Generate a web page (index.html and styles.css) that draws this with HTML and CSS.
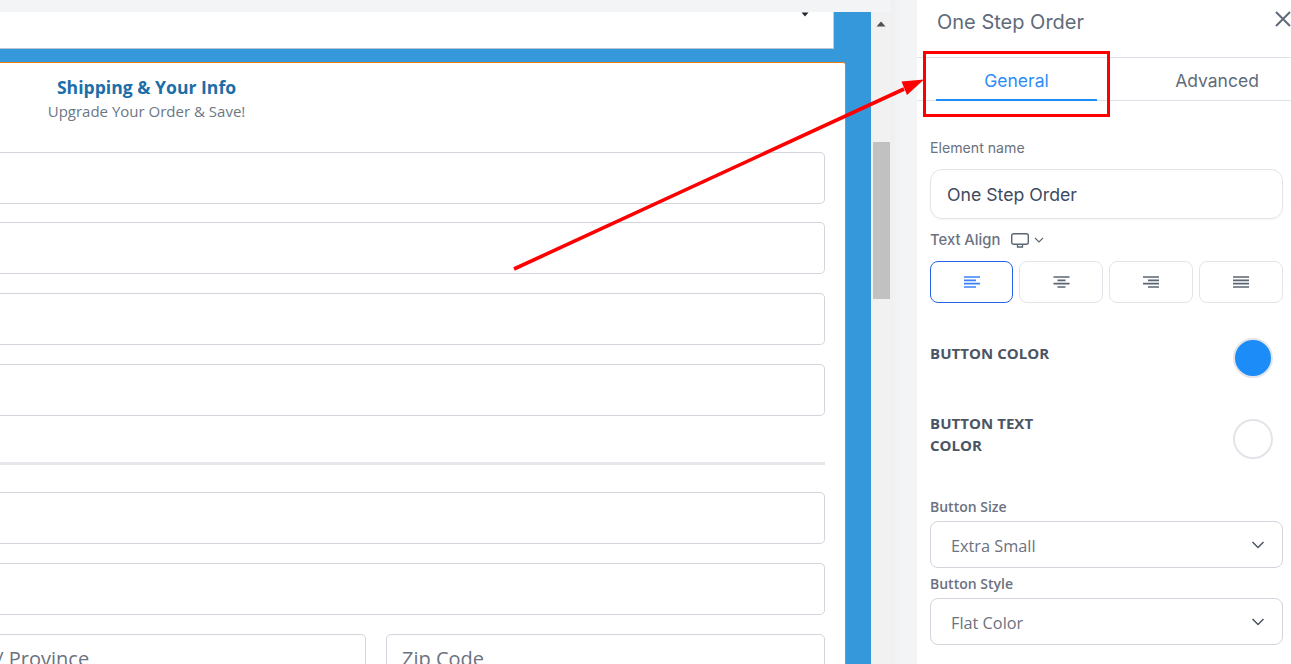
FILE: index.html
```html
<!DOCTYPE html>
<html lang="en">
<head>
<meta charset="utf-8">
<title>One Step Order</title>
<link rel="stylesheet" href="styles.css">
</head>
<body>
<div class="app">
  <main class="canvas">
    <div class="topbar"></div>
    <div class="stage">
      <div class="page">
        <div class="hero"><svg class="caret-mini" width="8" height="5" viewBox="0 0 8 5"><path d="M0.5 0.5h7L4 4.5z" fill="#1f2937"/></svg></div>
        <section class="card">
          <header class="card-head">
            <h2>Shipping &amp; Your Info</h2>
            <p>Upgrade Your Order &amp; Save!</p>
          </header>
          <div class="fields upper">
            <div class="field"></div>
            <div class="field"></div>
            <div class="field"></div>
            <div class="field"></div>
          </div>
          <hr class="rule">
          <div class="fields">
            <div class="field"></div>
            <div class="field"></div>
            <div class="field-row">
              <div class="field ph state"><span>State / Province</span></div>
              <div class="field ph"><span>Zip Code</span></div>
            </div>
          </div>
        </section>
      </div>
      <div class="scrollbar">
        <svg class="sb-arrow" width="10" height="6" viewBox="0 0 10 6"><path d="M5 0.5L9.5 5.5H0.5z" fill="#505050"/></svg>
        <div class="sb-thumb"></div>
      </div>
    </div>
  </main>
  <div class="gutter"></div>
  <aside class="panel">
    <div class="panel-head">
      <h1>One Step Order</h1>
      <svg class="close" width="16" height="16" viewBox="0 0 16 16"><path d="M1 1L15 15M15 1L1 15" stroke="#5f6b7a" stroke-width="2" fill="none"/></svg>
    </div>
    <nav class="tabs">
      <div class="tab active">General</div>
      <div class="tab">Advanced</div>
    </nav>
    <div class="panel-body">
      <label class="lbl name-lbl">Element name</label>
      <div class="name-input">One Step Order</div>
      <div class="align-head">
        <span>Text Align</span>
        <svg width="18" height="15" viewBox="0 0 18 15"><rect x="0.7" y="0.7" width="16.6" height="10.6" rx="2" fill="none" stroke="#5b6573" stroke-width="1.4"/><path d="M6.5 11.5v2.5h5v-2.5" fill="none" stroke="#5b6573" stroke-width="1.3"/></svg>
        <svg width="10" height="6" viewBox="0 0 10 6"><path d="M1 1l4 4 4-4" fill="none" stroke="#5b6573" stroke-width="1.1"/></svg>
      </div>
      <div class="align-row">
        <div class="align-btn on"><svg width="16" height="12" viewBox="0 0 16 12"><path d="M0 1h16M0 4.4h12M0 7.7h16M0 11h12" stroke="#3b82f6" stroke-width="1.7"/></svg></div>
        <div class="align-btn"><svg width="17" height="12" viewBox="0 0 17 12"><path d="M0.5 1h16M4.5 4.4h8M0.5 7.7h16M4.5 11h8" stroke="#5b6573" stroke-width="1.7"/></svg></div>
        <div class="align-btn"><svg width="16" height="12" viewBox="0 0 16 12"><path d="M0 1h16M5 4.4h11M0 7.7h16M5 11h11" stroke="#5b6573" stroke-width="1.7"/></svg></div>
        <div class="align-btn"><svg width="16" height="12" viewBox="0 0 16 12"><path d="M0 1h16M0 4.4h16M0 7.7h16M0 11h16" stroke="#5b6573" stroke-width="1.7"/></svg></div>
      </div>
      <div class="color-row first">
        <span class="color-name">BUTTON COLOR</span>
        <span class="swatch blue"></span>
      </div>
      <div class="color-row second">
        <span class="color-name">BUTTON TEXT<br>COLOR</span>
        <span class="swatch"></span>
      </div>
      <label class="lbl size-lbl">Button Size</label>
      <div class="select"><span>Extra Small</span><svg width="14" height="8" viewBox="0 0 14 8"><path d="M1.5 1l5.5 5.5L12.5 1" fill="none" stroke="#4b5563" stroke-width="1.5"/></svg></div>
      <label class="lbl style-lbl">Button Style</label>
      <div class="select"><span>Flat Color</span><svg width="14" height="8" viewBox="0 0 14 8"><path d="M1.5 1l5.5 5.5L12.5 1" fill="none" stroke="#4b5563" stroke-width="1.5"/></svg></div>
    </div>
  </aside>
  <div class="callout"></div>
  <svg class="arrow" width="440" height="220" viewBox="0 0 440 220"><path d="M14 209L404 29" stroke="#ff0000" stroke-width="3.6" fill="none"/><path d="M424 19.5L401.5 21.5L407 35z" fill="#ff0000"/></svg>
</div>
</body>
</html>
```
FILE: styles.css
```css
* { box-sizing: border-box; }
html, body { margin: 0; height: 100%; overflow: hidden; }
body { background: #f3f4f6; font-family: "Open Sans", sans-serif; }
.app { position: relative; display: flex; width: 1291px; height: 664px; overflow: hidden; }
.canvas { width: 891px; display: flex; flex-direction: column; flex: none; }
.topbar { height: 12px; background: #f3f4f6; }
.stage { flex: 1; display: flex; min-height: 0; }
.page { width: 871px; background: #3498db; overflow: hidden; }
.hero { position: relative; width: 834px; height: 37px; background: #fff; border-right: 1px solid #c9ced6; border-bottom: 1px solid #b9c4d2; }
.caret-mini { position: absolute; right: 24px; top: 0; }
.card { width: 846px; margin-top: 13px; height: 640px; background: #fff; border-top: 1px solid #f07c12; border-right: 1px solid #e0801c; border-top-right-radius: 3px; }
.card-head { width: 293px; text-align: center; padding-top: 11px; height: 89px; }
.card-head h2 { margin: 0 0 1px; font-size: 17.6px; line-height: 26px; font-weight: 700; color: #1b6ea8; }
.card-head p { margin: 0; font-size: 15px; line-height: 21px; color: #6b7785; }
.fields { display: flex; flex-direction: column; gap: 19px; width: 825px; }
.field { height: 52px; background: #fff; border: 1px solid #d3d5dc; border-radius: 0 5px 5px 0; border-left: 0; }
.upper > .field:first-child { margin-bottom: -1px; }
.rule { width: 825px; height: 3px; margin: 46px 0 27px; border: 0; background: #e5e7eb; }
.field-row { display: flex; gap: 20px; }
.field.ph { flex: 1; border-left: 1px solid #d3d5dc; border-radius: 5px; padding-left: 15px; font-size: 20px; line-height: 47px; color: #6b7280; white-space: nowrap; overflow: hidden; }
.field.state { flex: none; width: 366px; border-left: 0; border-radius: 0 5px 5px 0; padding-left: 0; }
.field.state span { display: block; margin-left: -56.5px; }
.scrollbar { position: relative; width: 20px; background: #f1f1f1; padding: 0 1px 0 2px; }
.sb-arrow { position: absolute; left: 5px; top: 9px; }
.sb-thumb { margin-top: 130px; height: 157px; background: #c1c1c1; }
.gutter { width: 26px; flex: none; background: linear-gradient(90deg, #eeeff1, #f3f4f6 8px); }
.panel { width: 374px; flex: none; background: #fff; font-family: Inter, sans-serif; }
.panel-head { position: relative; padding: 9px 0 0 20px; border-bottom: 1px solid #dde2e8; height: 58px; }
.panel-head h1 { margin: 0; font-size: 20px; line-height: 27px; font-weight: 400; color: #5f6b7a; }
.close { position: absolute; right: 0; top: 11px; }
.tabs { display: flex; height: 43px; border-bottom: 1px solid #dde2e8; padding-left: 19px; }
.tab { width: 161px; text-align: center; font-size: 17.5px; line-height: 46px; font-weight: 400; color: #5f6b7a; height: 43px; }
.tab + .tab { flex: 1; width: auto; margin-left: 46px; }
.tab.active { color: #2f8cf6; border-bottom: 2px solid #1b8cf8; }
.panel-body { padding: 0 8px 0 13px; }
.lbl { display: block; font-size: 14px; color: #6b7280; line-height: 20px; font-weight: 400; }
.name-lbl { margin-top: 37px; font-size: 14.15px; }
.name-input { margin-top: 11px; height: 50px; border: 1px solid #e2e4e9; border-radius: 12px; padding-left: 16px; font-size: 17.7px; line-height: 49px; color: #3d4a5f; box-shadow: 0 1px 2px rgba(0,0,0,.04); }
.align-head { display: flex; align-items: center; gap: 11px; height: 22px; padding-top: 2px; margin-top: 9px; font-size: 14.8px; font-weight: 500; color: #6b7280; }
.align-head svg + svg { margin-left: -6px; }
.align-row { display: grid; grid-template-columns: 83px 84px 84px 84px; gap: 6px; margin-top: 11px; }
.align-btn { height: 42px; border: 1px solid #e2e4e9; border-radius: 8px; display: flex; align-items: center; justify-content: center; }
.align-btn.on { border-color: #2563eb; }
.color-row { display: flex; justify-content: space-between; align-items: flex-start; padding-right: 10px; }
.color-row.first { margin-top: 35px; }
.color-row.first .color-name { padding-top: 4px; }
.color-row.second { margin-top: 34px; }
.color-row.second .swatch { margin-top: 7px; }
.color-name { font-family: "Open Sans", sans-serif; font-size: 15px; font-weight: 700; line-height: 22px; color: #4b5563; letter-spacing: 0.05px; }
.swatch { width: 40px; height: 40px; border-radius: 50%; background: #fff; border: 2px solid #e2e4e9; }
.swatch.blue { background: #1b8cf8; }
.size-lbl { margin-top: 38px; font-family: "Open Sans", sans-serif; font-weight: 600; }
.style-lbl { margin-top: 6px; font-family: "Open Sans", sans-serif; font-weight: 600; }
.select { display: flex; align-items: center; justify-content: space-between; height: 47px; margin-top: 4px; padding: 0 17px 0 20px; border: 1px solid #d3d5dc; border-radius: 8px; font-family: "Open Sans", sans-serif; font-size: 16.3px; color: #6b7280; }
.select span { padding-top: 2px; }
.callout { position: absolute; left: 923px; top: 51px; width: 187px; height: 66px; border: 3px solid #ff0000; }
.arrow { position: absolute; left: 500px; top: 60px; }
```
